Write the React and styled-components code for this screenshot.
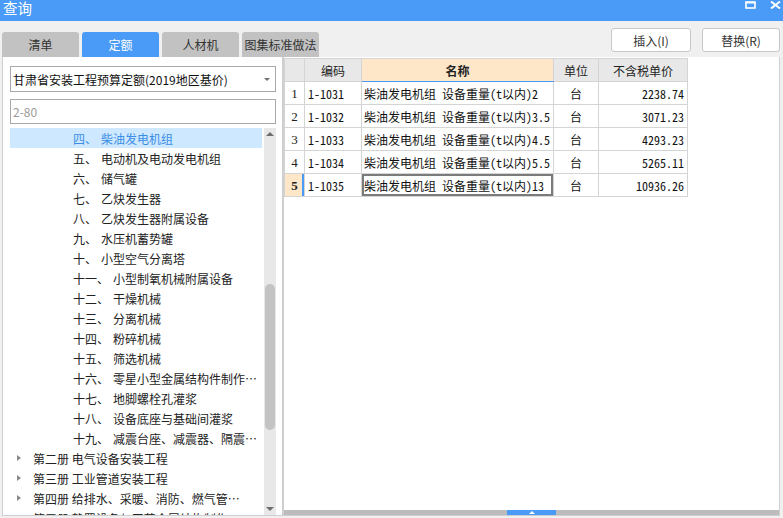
import React from "react";
import styled, { createGlobalStyle } from "styled-components";

const GlobalStyle = createGlobalStyle`
  html, body {
    margin: 0;
    padding: 0;
    background: #f0f0f0;
    font-family: "Noto Sans CJK SC", "Liberation Sans", sans-serif;
    font-size: 12px;
    color: #222;
  }
  * { box-sizing: border-box; }
`;

const BLUE = "#4a9bf7";
const MONO = `"Noto Sans Mono CJK SC", "Liberation Mono", "Noto Sans CJK SC", monospace`;

const Window = styled.div`
  width: 783px;
  height: 518px;
  display: flex;
  flex-direction: column;
  overflow: hidden;
`;

const TitleBar = styled.div`
  height: 21px;
  background: ${BLUE};
  display: flex;
  align-items: flex-start;
  justify-content: space-between;
  padding: 0 2px 0 3px;
  color: #fff;
`;

const Title = styled.span`
  font-size: 14.5px;
  line-height: 16px;
`;

const TitleIcons = styled.div`
  display: flex;
  gap: 14px;
  margin-top: 1px;
`;

const TopRow = styled.div`
  height: 36px;
  display: flex;
  justify-content: space-between;
  padding: 0 3px 0 2px;
`;

const Tabs = styled.div`
  display: flex;
  align-items: flex-end;
  gap: 3px;
`;

const Tab = styled.div`
  width: 77px;
  height: 25px;
  border-radius: 3px 3px 0 0;
  background: ${(p) => (p.$active ? BLUE : "#c2c2c2")};
  color: ${(p) => (p.$active ? "#fff" : "#333")};
  display: flex;
  align-items: center;
  justify-content: center;
  line-height: 17px;
`;

const Buttons = styled.div`
  display: flex;
  gap: 11px;
  padding-top: 7px;
`;

const Button = styled.button`
  width: ${(p) => p.$w}px;
  height: 24px;
  border: 1px solid #c8c8c8;
  border-radius: 3px;
  background: #fff;
  font-family: inherit;
  font-size: 12px;
  color: #333;
  padding: 0;
  line-height: 17px;
`;

const Main = styled.div`
  height: 459px;
  display: flex;
  padding-left: 2px;
`;

const LeftPanel = styled.div`
  width: 281px;
  height: 459px;
  background: #fff;
  border: 1px solid #cfcfcf;
  border-top: none;
  padding: 9px 6px 0 7px;
  display: flex;
  flex-direction: column;
`;

const Select = styled.div`
  height: 26px;
  border: 1px solid #a9a9a9;
  display: flex;
  align-items: center;
  justify-content: space-between;
  padding: 0 5px 0 2px;
  color: #111;
  line-height: 17px;
`;

const Caret = styled.span`
  width: 0;
  height: 0;
  border-left: 3.5px solid transparent;
  border-right: 3.5px solid transparent;
  border-top: 3px solid #707070;
`;

const Input = styled.div`
  height: 25px;
  margin-top: 7px;
  border: 1px solid #a9a9a9;
  display: flex;
  align-items: center;
  padding-left: 2px;
  color: #9a9a9a;
  line-height: 17px;
`;

const TreeBox = styled.div`
  margin-top: 4px;
  flex: 1;
  display: flex;
  gap: 2px;
  overflow: hidden;
`;

const TreeList = styled.div`
  width: 253px;
  overflow: hidden;
`;

const TreeRow = styled.div`
  height: 20px;
  display: flex;
  align-items: center;
  padding-left: ${(p) => p.$indent}px;
  background: ${(p) => (p.$selected ? "#cde8ff" : "transparent")};
  color: ${(p) => (p.$selected ? "#3a8de6" : "#222")};
  white-space: nowrap;
  line-height: 17px;
`;

const RowText = styled.span`
  overflow: hidden;
  text-overflow: ellipsis;
  max-width: 182px;
  margin-left: 4px;
`;

const GroupText = styled.span`
  margin-left: 12px;
  overflow: hidden;
  text-overflow: ellipsis;
  max-width: 218px;
`;

const Expander = styled.span`
  width: 0;
  height: 0;
  border-top: 3.5px solid transparent;
  border-bottom: 3.5px solid transparent;
  border-left: 4px solid #8a8a8a;
`;

const ScrollTrack = styled.div`
  width: 12px;
  background: #e8e8e8;
  display: flex;
  flex-direction: column;
  align-items: center;
  padding: 4px 0;
`;

const Arrow = styled.span`
  width: 0;
  height: 0;
  border-left: 4px solid transparent;
  border-right: 4px solid transparent;
  ${(p) => (p.$down ? "border-top" : "border-bottom")}: 4px solid #6e6e6e;
`;

const Thumb = styled.div`
  width: 10px;
  height: 146px;
  margin-top: 148px;
  border-radius: 5px;
  background: #c3c3c3;
  flex: none;
`;

const Spacer = styled.div`
  flex: 1;
`;

const RightPanel = styled.div`
  width: 497px;
  height: 459px;
  background: #fff;
  border: 1px solid #cfcfcf;
  border-top: none;
  display: flex;
  flex-direction: column;
`;

const Table = styled.table`
  border-collapse: collapse;
  table-layout: fixed;
  width: 403px;
  margin-top: 1px;
`;

const Th = styled.th`
  height: 23px;
  padding: 0;
  border: 1px solid #d4d4d4;
  border-bottom: 1px solid ${(p) => (p.$accent ? BLUE : "#d4d4d4")};
  background: ${(p) => (p.$accent ? "#fee6c9" : "#e8e8e8")};
  font-weight: ${(p) => (p.$accent ? "bold" : "normal")};
  color: #222;
  font-size: 12px;
  line-height: 17px;
`;

const Td = styled.td`
  height: 23px;
  padding: 0 ${(p) => p.$pr ?? 2}px 0 ${(p) => p.$pl ?? 2}px;
  border: 1px solid #d4d4d4;
  text-align: ${(p) => p.$align || "left"};
  font-family: ${(p) => (p.$mono ? MONO : "inherit")};
  white-space: nowrap;
  overflow: hidden;
  line-height: 17px;
  color: #111;
`;

const NumCell = styled.td`
  height: 23px;
  padding: 0;
  border: 1px solid #d4d4d4;
  text-align: center;
  font-family: "Liberation Serif", serif;
  font-size: 13px;
  line-height: 17px;
  background: ${(p) => (p.$active ? "#fee6c9" : "#fff")};
  font-weight: ${(p) => (p.$active ? "bold" : "normal")};
  box-shadow: ${(p) => (p.$active ? `inset -2px 0 0 ${BLUE}` : "none")};
`;

const NameCell = styled(Td)`
  box-shadow: ${(p) => (p.$focus ? "inset 0 0 0 2px #7b7b7b" : "none")};
`;

const BottomBar = styled.div`
  height: 5px;
  background: #bcbcbc;
  display: flex;
  justify-content: center;
`;

const Handle = styled.div`
  width: 49px;
  background: ${BLUE};
  display: flex;
  align-items: center;
  justify-content: center;
`;

const HandleArrow = styled.span`
  width: 0;
  height: 0;
  border-left: 3px solid transparent;
  border-right: 3px solid transparent;
  border-bottom: 3px solid #fff;
`;

const subItems = [
  ["四、", "柴油发电机组"],
  ["五、", "电动机及电动发电机组"],
  ["六、", "储气罐"],
  ["七、", "乙炔发生器"],
  ["八、", "乙炔发生器附属设备"],
  ["九、", "水压机蓄势罐"],
  ["十、", "小型空气分离塔"],
  ["十一、", "小型制氧机械附属设备"],
  ["十二、", "干燥机械"],
  ["十三、", "分离机械"],
  ["十四、", "粉碎机械"],
  ["十五、", "筛选机械"],
  ["十六、", "零星小型金属结构件制作安装"],
  ["十七、", "地脚螺栓孔灌浆"],
  ["十八、", "设备底座与基础间灌浆"],
  ["十九、", "减震台座、减震器、隔震装置安装"],
];

const groups = [
  "第二册 电气设备安装工程",
  "第三册 工业管道安装工程",
  "第四册 给排水、采暖、消防、燃气管道及器具安装工程",
  "第五册 静置设备与工艺金属结构制作安装工程",
];

const rows = [
  ["1-1031", "柴油发电机组 设备重量(t以内)2", "台", "2238.74"],
  ["1-1032", "柴油发电机组 设备重量(t以内)3.5", "台", "3071.23"],
  ["1-1033", "柴油发电机组 设备重量(t以内)4.5", "台", "4293.23"],
  ["1-1034", "柴油发电机组 设备重量(t以内)5.5", "台", "5265.11"],
  ["1-1035", "柴油发电机组 设备重量(t以内)13", "台", "10936.26"],
];

function TitleButtons() {
  return (
    <TitleIcons>
      <svg width="11" height="8" viewBox="0 0 11 8">
        <rect x="1" y="1.2" width="9" height="5.8" fill="none" stroke="#fff" strokeWidth="1.6" />
        <rect x="0.5" y="0.5" width="10" height="2" fill="#fff" />
      </svg>
      <svg width="11" height="8" viewBox="0 0 11 8">
        <path d="M1 0.5 L10 7.5 M10 0.5 L1 7.5" stroke="#fff" strokeWidth="2" />
      </svg>
    </TitleIcons>
  );
}

export default function App() {
  return (
    <Window>
      <GlobalStyle />
      <TitleBar>
        <Title>查询</Title>
        <TitleButtons />
      </TitleBar>
      <TopRow>
        <Tabs>
          <Tab>清单</Tab>
          <Tab $active>定额</Tab>
          <Tab>人材机</Tab>
          <Tab>图集标准做法</Tab>
        </Tabs>
        <Buttons>
          <Button $w={80}>插入(I)</Button>
          <Button $w={78}>替换(R)</Button>
        </Buttons>
      </TopRow>
      <Main>
        <LeftPanel>
          <Select>
            <span>甘肃省安装工程预算定额(2019地区基价)</span>
            <Caret />
          </Select>
          <Input>2-80</Input>
          <TreeBox>
            <TreeList>
              {subItems.map(([no, name], i) => (
                <TreeRow key={no} $indent={63} $selected={i === 0}>
                  <span>{no}</span>
                  <RowText>{name}</RowText>
                </TreeRow>
              ))}
              {groups.map((g) => (
                <TreeRow key={g} $indent={7}>
                  <Expander />
                  <GroupText>{g}</GroupText>
                </TreeRow>
              ))}
            </TreeList>
            <ScrollTrack>
              <Arrow />
              <Thumb />
              <Spacer />
              <Arrow $down />
            </ScrollTrack>
          </TreeBox>
        </LeftPanel>
        <RightPanel>
          <Table>
            <colgroup>
              <col style={{ width: 20 }} />
              <col style={{ width: 57 }} />
              <col style={{ width: 192 }} />
              <col style={{ width: 45 }} />
              <col style={{ width: 89 }} />
            </colgroup>
            <thead>
              <tr>
                <Th />
                <Th>编码</Th>
                <Th $accent>名称</Th>
                <Th>单位</Th>
                <Th>不含税单价</Th>
              </tr>
            </thead>
            <tbody>
              {rows.map((r, i) => {
                const last = i === rows.length - 1;
                return (
                  <tr key={r[0]}>
                    <NumCell $active={last}>{i + 1}</NumCell>
                    <Td $mono $pl={3}>{r[0]}</Td>
                    <NameCell $mono $focus={last}>{r[1]}</NameCell>
                    <Td $align="center">{r[2]}</Td>
                    <Td $mono $align="right" $pr={3}>{r[3]}</Td>
                  </tr>
                );
              })}
            </tbody>
          </Table>
          <Spacer />
          <BottomBar>
            <Handle>
              <HandleArrow />
            </Handle>
          </BottomBar>
        </RightPanel>
      </Main>
    </Window>
  );
}
